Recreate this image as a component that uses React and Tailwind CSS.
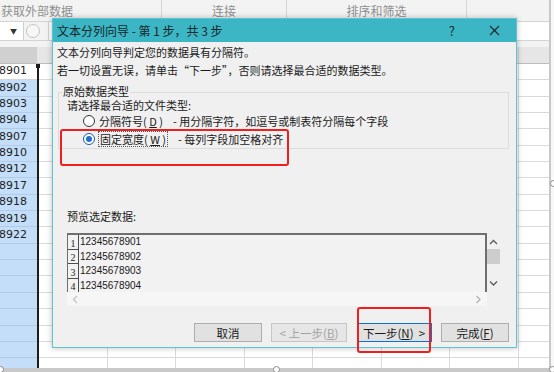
import React from 'react'

const cjk = "font-['Noto_Sans_CJK_SC','Noto_Sans',sans-serif]"

const cellValues = ['8901', '8902', '8903', '8904', '8907', '8910', '8912', '8917', '8918', '8919', '8922', '', '', '', '', '', '', '', '', '']
const gridCols = [0, 1, 2, 3, 4, 5, 6, 7]
const previewRows = ['12345678901', '12345678902', '12345678903', '12345678904']

const Chevron = ({ dir, color }) => {
  const paths = {
    up: 'M1 5 L4.5 1.5 L8 5',
    down: 'M1 1.5 L4.5 5 L8 1.5',
    left: 'M5 1 L1.5 4.5 L5 8',
    right: 'M1.5 1 L5 4.5 L1.5 8',
  }
  const vertical = dir === 'up' || dir === 'down'
  return (
    <svg width={vertical ? 9 : 7} height={vertical ? 7 : 9} viewBox={vertical ? '0 0 9 7' : '0 0 7 9'}>
      <path d={paths[dir]} fill="none" stroke={color} strokeWidth="1.3" />
    </svg>
  )
}

const Radio = ({ checked }) => (
  <span
    className={`flex h-[12px] w-[12px] shrink-0 items-center justify-center rounded-full border bg-white ${
      checked ? 'border-[#1c5aa6]' : 'border-[#333333]'
    }`}
  >
    {checked && <span className="h-[6px] w-[6px] rounded-full bg-[#1f6fd1]" />}
  </span>
)

const SheetRow = ({ value, first }) => (
  <div className="flex h-[16.35px] shrink-0">
    <div
      className={`flex w-[37px] shrink-0 items-center justify-end overflow-hidden whitespace-nowrap border-b pr-[10px] font-['DejaVu_Sans',sans-serif] text-[11px] text-[#222] ${
        first ? 'border-[#d4d4d4] bg-white' : 'border-[#b2cbe6] bg-[#c4def9]'
      }`}
    >
      {value && `1234567${value}`}
    </div>
    <div className="w-[2px] shrink-0 bg-[#1c1c1c]" />
    {gridCols.map((c) => (
      <div key={c} className="w-[68.5px] shrink-0 border-r border-b border-[#dadada]" />
    ))}
  </div>
)

const Button = ({ children, variant }) => {
  const styles = {
    normal: 'border-[#adadad] bg-[#e1e1e1] text-[#1a1a1a]',
    disabled: 'border-[#c6c6c6] bg-[#e6e6e6] text-[#a3a3a3]',
    focus: 'border-[#0a74d6] border-r-[3px] bg-[#e1e1e1] text-[#1a1a1a]',
  }
  return (
    <div className={`flex h-[19px] items-center justify-center whitespace-pre border ${styles[variant]}`}>
      {children}
    </div>
  )
}

const App = () => {
  return (
    <div className={`relative h-[372px] w-[554px] overflow-hidden bg-white ${cjk}`}>
      <div className="flex h-[368px]">
        {/* Excel sheet behind */}
        <div className="flex w-[549px] flex-col overflow-hidden">
          {/* Ribbon group labels */}
          <div className="flex h-[22px] shrink-0 border-b border-[#d4d4d4] bg-[#f3f3f3] text-[12px] text-[#8f8f8f]">
            <div className="flex w-[162px] items-center border-r border-[#d6d6d6] pl-[1px]">获取外部数据</div>
            <div className="flex w-[125px] items-center justify-center border-r border-[#d6d6d6]">连接</div>
            <div className="flex w-[180px] items-center justify-center border-r border-[#d6d6d6]">排序和筛选</div>
            <div className="flex-1" />
          </div>

          {/* Name box / formula bar */}
          <div className="flex h-[19px] shrink-0 items-center border-b border-[#d4d4d4] bg-[#f3f3f3]">
            <div className="flex h-full w-[24px] items-center justify-end border-r border-[#d0d0d0] bg-white pr-[6px] text-[7px] text-[#333]">
              ▼
            </div>
            <div className="ml-[2px] h-[14px] w-[14px] rounded-full border border-[#c4c4c4] bg-[#f7f7f7]" />
            <div className="ml-[8px] h-full flex-1 border-l border-[#d0d0d0] bg-white" />
          </div>

          <div className="h-[6px] shrink-0 bg-[#f3f3f3]" />

          {/* Column headers */}
          <div className="flex h-[17px] shrink-0 border-b border-[#bdbdbd] bg-[#e6e6e6]">
            <div className="w-[37px] shrink-0 bg-[#d0d0d0]" />
            <div className="w-[2px] shrink-0 bg-[#e6e6e6]" />
            {gridCols.map((c) => (
              <div key={c} className="w-[68.5px] shrink-0 border-r border-[#cfcfcf]" />
            ))}
          </div>

          {/* Cells */}
          <div className="relative flex-1 overflow-hidden">
            {cellValues.map((v, i) => (
              <SheetRow key={i} value={v} first={i === 0} />
            ))}
            <div className="absolute left-[36px] top-0 h-[4px] w-[4px] bg-[#1c1c1c]" />
          </div>
        </div>
        <div className="w-[2px] bg-[#c8c8c8]" />
        <div className="flex-1 bg-[#f8f8f8]" />
      </div>
      <div className="h-[4px] bg-[#c9c9c9]" />

      {/* Text import wizard dialog */}
      <div className="absolute left-[52px] top-[18px] flex h-[330px] w-[465px] flex-col border border-[#5ec3d1] shadow-[0_0_6px_rgba(0,0,0,0.25)]">
        <div className="flex h-[23px] shrink-0 items-center bg-[#3cb6c5] pl-[4px] text-[12px] text-[#15262a]">
          <span>文本分列向导 - 第 1 步，共 3 步</span>
          <span className="ml-auto text-[13px]">?</span>
          <svg className="ml-[34px] mr-[16px]" width="11" height="11" viewBox="0 0 11 11">
            <path d="M1 1 L10 10 M10 1 L1 10" stroke="#1b2a2e" strokeWidth="1.2" />
          </svg>
        </div>

        <div className="flex flex-1 flex-col bg-[#f0f0f0] pl-[4px] pt-[1px] text-[11px] leading-[18px] text-[#1a1a1a]">
          <p>文本分列向导判定您的数据具有分隔符。</p>
          <p>若一切设置无误，请单击“下一步”，否则请选择最合适的数据类型。</p>

          {/* Group box */}
          <div className="ml-[1px] mt-[13px] h-[57px] w-[451px] shrink-0 border border-[#dcdcdc] leading-[14px]">
            <div className="-mt-[9px] ml-[3px] w-fit bg-[#f0f0f0] px-[1px]">原始数据类型</div>
            <div className="pl-[8px]">请选择最合适的文件类型:</div>
            <div className="flex h-[18px] items-center pl-[24px]">
              <Radio />
              <span className="ml-[4px] whitespace-pre">
                分隔符号( <span className="underline">D</span> )
              </span>
              <span className="ml-[10px] whitespace-pre">- 用分隔字符，如逗号或制表符分隔每个字段</span>
            </div>
            <div className="flex h-[18px] items-center pl-[24px]">
              <Radio checked />
              <span className="ml-[3px] whitespace-pre border border-dotted border-[#555] px-[1px]">
                固定宽度( <span className="underline">W</span> )
              </span>
              <span className="ml-[10px] whitespace-pre">- 每列字段加空格对齐</span>
            </div>
          </div>

          <div className="ml-[10px] mt-[60px] leading-[14px]">预览选定数据:</div>

          {/* Preview */}
          <div className="ml-[10px] mt-[10px] flex h-[59px]">
            <div className="h-full w-[420px] overflow-hidden border-l border-r-2 border-t-2 border-[#6f6f6f] bg-[#f2f2f2]">
              {previewRows.map((r, i) => (
                <div key={r} className="flex h-[14.5px]">
                  <div className="flex w-[11px] shrink-0 items-end justify-center border-b border-r border-[#4d4d4d] font-['Liberation_Serif',serif] text-[10px] leading-[11px]">
                    {i + 1}
                  </div>
                  <div className="pl-[1px] font-['Liberation_Sans',sans-serif] text-[10px] leading-[14.5px]">{r}</div>
                </div>
              ))}
            </div>
            <div className="flex w-[13px] flex-col items-center">
              <div className="mt-[6px]">
                <Chevron dir="up" color="#5a5a5a" />
              </div>
              <div className="mt-[3px] h-[15px] w-[13px] bg-[#cdcdcd]" />
              <div className="mt-auto mb-[5px]">
                <Chevron dir="down" color="#5a5a5a" />
              </div>
            </div>
          </div>
          <div className="ml-[10px] flex h-[14px] w-[420px] items-center justify-between bg-[#f6f6f6] px-[5px]">
            <Chevron dir="left" color="#c4c4c4" />
            <Chevron dir="right" color="#b4b4b4" />
          </div>

          {/* Buttons */}
          <div className="ml-[137px] mt-[17px] flex text-[11.5px]">
            <div className="w-[68px]">
              <Button variant="normal">取消</Button>
            </div>
            <div className="ml-[9px] w-[76px]">
              <Button variant="disabled">
                {'< 上一步('}
                <span className="underline">B</span>)
              </Button>
            </div>
            <div className="ml-[11px] w-[74px]">
              <Button variant="focus">
                下一步(<span className="underline">N</span>
                {')  >'}
              </Button>
            </div>
            <div className="ml-[9px] w-[68px]">
              <Button variant="normal">
                完成(<span className="underline">F</span>)
              </Button>
            </div>
          </div>
        </div>
      </div>

      {/* Red annotation boxes */}
      <div className="absolute left-[60px] top-[129px] h-[37px] w-[229px] rounded-[3px] border-2 border-[#f01e1e]" />
      <div className="absolute left-[357px] top-[307px] h-[46px] w-[74px] rounded-[3px] border-2 border-[#f01e1e]" />

      {/* Image selection handles */}
      <div className="absolute left-[-3px] top-[366px] h-[7px] w-[7px] rounded-full border border-[#8a8a8a] bg-white" />
      <div className="absolute left-[273px] top-[366px] h-[7px] w-[7px] rounded-full border border-[#8a8a8a] bg-white" />
      <div className="absolute left-[549px] top-[366px] h-[7px] w-[7px] rounded-full border border-[#8a8a8a] bg-white" />
      <div className="absolute left-[550px] top-[180px] h-[7px] w-[7px] rounded-full border border-[#8a8a8a] bg-white" />
    </div>
  )
}

export default App
